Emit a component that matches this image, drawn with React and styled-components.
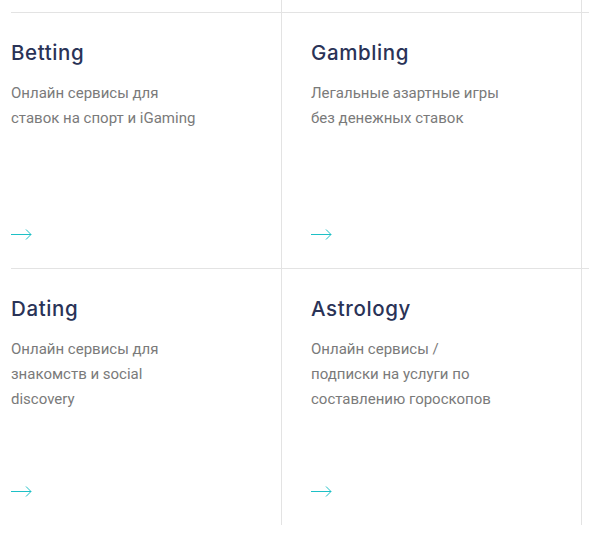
import React from "react";
import styled, { createGlobalStyle } from "styled-components";

const Global = createGlobalStyle`
  html, body { margin: 0; padding: 0; background: #fff; overflow: hidden; }
  body { width: 589px; height: 544px; }
`;

const Page = styled.div`
  width: 589px;
  height: 544px;
  overflow: hidden;
  padding-left: 11px;
  box-sizing: border-box;
`;

const Grid = styled.div`
  display: grid;
  grid-template-columns: 271px 300px 300px;
  grid-template-rows: 12px 256px 257px;
  width: 871px;
`;

const Stub = styled.div`
  border-right: 1px solid #e3e3e3;
`;

const Card = styled.div`
  display: flex;
  flex-direction: column;
  box-sizing: border-box;
  border-top: 1px solid #e3e3e3;
  border-right: 1px solid #e3e3e3;
  padding: 27px 20px 30px ${(p) => (p.$first ? "0" : "29px")};
`;

const Title = styled.h3`
  margin: 0;
  font-family: Inter, "Noto Sans", sans-serif;
  font-weight: 500;
  font-size: 20.5px;
  line-height: 26px;
  letter-spacing: 0.6px;
  color: #2a3357;
`;

const Desc = styled.p`
  margin: 15px 0 0;
  font-family: Roboto, "Noto Sans", sans-serif;
  font-weight: 400;
  font-size: 15px;
  line-height: 25px;
  color: #7a7a7a;
  max-width: 200px;
`;

const ArrowLink = styled.a`
  margin-top: auto;
  display: block;
  width: 21px;
  height: 12px;
  color: #1dc0c6;
`;

const Arrow = () => (
  <svg width="21" height="12" viewBox="0 0 21 12" fill="none" stroke="currentColor" strokeWidth="1">
    <path d="M0 6.5H20M15 1.5L20 6.5L15 11.5" />
  </svg>
);

const items = [
  { title: "Betting", lines: ["Онлайн сервисы для", "ставок на спорт и iGaming"] },
  { title: "Gambling", lines: ["Легальные азартные игры", "без денежных ставок"] },
  { title: "", lines: [] },
  { title: "Dating", lines: ["Онлайн сервисы для", "знакомств и social", "discovery"] },
  { title: "Astrology", lines: ["Онлайн сервисы /", "подписки на услуги по", "составлению гороскопов"] },
  { title: "", lines: [] },
];

export default function App() {
  return (
    <Page>
      <Global />
      <Grid>
        <Stub />
        <Stub />
        <Stub />
        {items.map((it, i) => (
          <Card key={i} $first={i % 3 === 0}>
            {it.title && (
              <>
                <Title>{it.title}</Title>
                <Desc>
                  {it.lines.map((l, j) => (
                    <React.Fragment key={j}>
                      {l}
                      {j < it.lines.length - 1 && <br />}
                    </React.Fragment>
                  ))}
                </Desc>
                <ArrowLink href="#" aria-label={it.title}>
                  <Arrow />
                </ArrowLink>
              </>
            )}
          </Card>
        ))}
      </Grid>
    </Page>
  );
}
